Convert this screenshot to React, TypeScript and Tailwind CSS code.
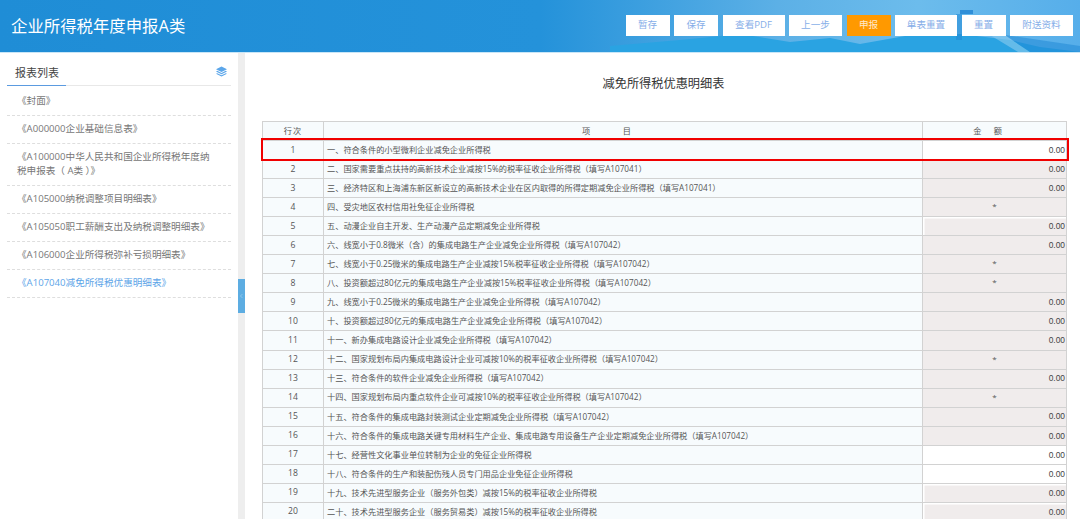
import { ChevronLeft } from 'lucide-react';

const FONT = '[font-family:"Open_Sans","Noto_Sans_CJK_SC",sans-serif]';

const BUTTONS = [
  { label: '暂存', width: 'w-[44px]' },
  { label: '保存', width: 'w-[44px]' },
  { label: '查看PDF', width: 'w-[62px]' },
  { label: '上一步', width: 'w-[53px]' },
  { label: '申报', width: 'w-[44px]', active: true },
  { label: '单表重置', width: 'w-[62px]' },
  { label: '重置', width: 'w-[44px]' },
  { label: '附送资料', width: 'w-[63px]' },
];

const FORMS = [
  '《封面》',
  '《A000000企业基础信息表》',
  '《A100000中华人民共和国企业所得税年度纳税申报表（ A类 ）》',
  '《A105000纳税调整项目明细表》',
  '《A105050职工薪酬支出及纳税调整明细表》',
  '《A106000企业所得税弥补亏损明细表》',
];

type Amount = 'white' | 'grey' | 'inset' | 'star';

const ROWS: { text: string; amount: Amount }[] = [
  { text: '一、符合条件的小型微利企业减免企业所得税', amount: 'white' },
  { text: '二、国家需要重点扶持的高新技术企业减按15%的税率征收企业所得税（填写A107041）', amount: 'grey' },
  { text: '三、经济特区和上海浦东新区新设立的高新技术企业在区内取得的所得定期减免企业所得税（填写A107041）', amount: 'grey' },
  { text: '四、受灾地区农村信用社免征企业所得税', amount: 'star' },
  { text: '五、动漫企业自主开发、生产动漫产品定期减免企业所得税', amount: 'inset' },
  { text: '六、线宽小于0.8微米（含）的集成电路生产企业减免企业所得税（填写A107042）', amount: 'grey' },
  { text: '七、线宽小于0.25微米的集成电路生产企业减按15%税率征收企业所得税（填写A107042）', amount: 'star' },
  { text: '八、投资额超过80亿元的集成电路生产企业减按15%税率征收企业所得税（填写A107042）', amount: 'star' },
  { text: '九、线宽小于0.25微米的集成电路生产企业减免企业所得税（填写A107042）', amount: 'grey' },
  { text: '十、投资额超过80亿元的集成电路生产企业减免企业所得税（填写A107042）', amount: 'grey' },
  { text: '十一、新办集成电路设计企业减免企业所得税（填写A107042）', amount: 'grey' },
  { text: '十二、国家规划布局内集成电路设计企业可减按10%的税率征收企业所得税（填写A107042）', amount: 'star' },
  { text: '十三、符合条件的软件企业减免企业所得税（填写A107042）', amount: 'grey' },
  { text: '十四、国家规划布局内重点软件企业可减按10%的税率征收企业所得税（填写A107042）', amount: 'star' },
  { text: '十五、符合条件的集成电路封装测试企业定期减免企业所得税（填写A107042）', amount: 'grey' },
  { text: '十六、符合条件的集成电路关键专用材料生产企业、集成电路专用设备生产企业定期减免企业所得税（填写A107042）', amount: 'grey' },
  { text: '十七、经营性文化事业单位转制为企业的免征企业所得税', amount: 'white' },
  { text: '十八、符合条件的生产和装配伤残人员专门用品企业免征企业所得税', amount: 'white' },
  { text: '十九、技术先进型服务企业（服务外包类）减按15%的税率征收企业所得税', amount: 'inset' },
  { text: '二十、技术先进型服务企业（服务贸易类）减按15%的税率征收企业所得税', amount: 'inset' },
];

function AmountCell({ amount }: { amount: Amount }) {
  if (amount === 'star') {
    return (
      <td className="border border-[#d2d2d2] bg-[#f0ecec] pb-[2px] text-center align-middle text-[8px] leading-none text-[#555]">
        *
      </td>
    );
  }
  const bg =
    amount === 'white'
      ? 'bg-white'
      : amount === 'grey'
        ? 'bg-[#f0ecec]'
        : 'bg-[#f0ecec] shadow-[inset_1.5px_1.5px_0_#fff]';
  return (
    <td className={`border border-[#d2d2d2] pr-px text-right align-middle font-['Liberation_Sans'] text-[8.4px] leading-none text-[#444] ${bg}`}>
      0.00
    </td>
  );
}

function HeaderArt() {
  return (
    <svg className="absolute inset-0 h-full w-full" viewBox="0 0 1080 52" preserveAspectRatio="none">
      <defs>
        <linearGradient id="sky" x1="0" x2="1" y1="0" y2="0">
          <stop offset="0" stopColor="#1f8dd6" />
          <stop offset="0.5" stopColor="#2492da" />
          <stop offset="0.72" stopColor="#5cb0e6" />
          <stop offset="0.85" stopColor="#6cbcec" />
          <stop offset="1" stopColor="#56aeea" />
        </linearGradient>
      </defs>
      <rect width="1080" height="52" fill="url(#sky)" />
      <path d="M610 46 L680 40 L740 34 L790 42 L830 38 L860 44 L905 36 L960 34 L1010 40 L1040 47 L1080 52 L610 52 Z" fill="#2aa3e2" />
      <path d="M956 14 L962 14 L962 40 L956 40 Z" fill="#1c86d4" opacity="0.5" />
      <path d="M960 10 L973 10 L973 14 L960 14 Z" fill="#2f8fd8" />
      <path d="M990 35 L1006 36 L1030 52 L1018 52 Z" fill="#8ccbee" opacity="0.6" />
      <path d="M1005 35 L1080 46 L1080 52 L1030 52 Z" fill="#1c86d4" opacity="0.5" />
    </svg>
  );
}

export default function App() {
  return (
    <div className={`flex h-[519px] w-[1080px] flex-col overflow-hidden bg-white ${FONT}`}>
      <header className="relative flex h-[53px] shrink-0 items-start justify-between border-b border-[#c9e6f7]">
        <HeaderArt />
        <h1 className="relative pl-[11px] pt-[16px] text-[16.4px] leading-[20px] text-white">企业所得税年度申报A类</h1>
        <div className="relative flex gap-[4.5px] pr-[7px] pt-[15px]">
          {BUTTONS.map((btn) => (
            <button
              key={btn.label}
              className={`h-[20.5px] text-[9.6px] leading-none ${btn.width} ${
                btn.active ? 'bg-[#ff9900] text-[#ffeacc]' : 'bg-white text-[#86aee8]'
              }`}
            >
              {btn.label}
            </button>
          ))}
        </div>
      </header>

      <div className="flex min-h-0 flex-1">
        <aside className="w-[238px] shrink-0 px-[7px]">
          <div className="flex h-[33px] items-start justify-between border-b border-[#e8e8e8]">
            <div className="h-[33px] w-[59px] border-b-[1.5px] border-[#5b9be0] pl-[8px] pt-[12px] text-[11px] leading-[16px] text-[#444]">
              报表列表
            </div>
            <svg className="mr-[4px] mt-[13px] h-[11px] w-[11px]" viewBox="0 0 12 11" fill="#5ba6ea">
              <path d="M6 0 L12 3 L6 6 L0 3 Z" />
              <path d="M1.4 4.7 L6 7 L10.6 4.7 L12 5.4 L6 8.4 L0 5.4 Z" />
              <path d="M1.4 7.3 L6 9.6 L10.6 7.3 L12 8 L6 11 L0 8 Z" />
            </svg>
          </div>
          <ul className="pt-[1.5px] text-[9.6px] leading-[14px] text-[#777]">
            {FORMS.map((name) => (
              <li key={name} className="border-b border-dashed border-[#dedede] py-[6.5px] pl-[10px] pr-[18px]">
                {name}
              </li>
            ))}
            <li className="border-b border-dashed border-[#dedede] py-[6.5px] pl-[10px] pr-[18px] text-[#5da5e8]">
              《A107040减免所得税优惠明细表》
            </li>
          </ul>
        </aside>

        <div className="relative w-[7px] shrink-0 bg-[#eeeeee]">
          <div className="absolute left-0 top-[226px] flex h-[34px] w-[6.5px] items-center justify-center bg-[#5dade2]">
            <ChevronLeft className="h-[8px] w-[8px] text-[#d5ebf8]" strokeWidth={1.5} />
          </div>
        </div>

        <main className="min-w-0 flex-1 pl-[17px] pr-[14px]">
          <h2 className="pb-[28px] pr-px pt-[22px] text-center text-[12.2px] leading-[18px] text-[#333]">
            减免所得税优惠明细表
          </h2>
          <div className="relative w-[804px]">
            <table className="w-full table-fixed border-collapse text-[8.2px] text-[#555]">
              <colgroup>
                <col className="w-[61px]" />
                <col className="w-[599px]" />
                <col className="w-[144px]" />
              </colgroup>
              <thead>
                <tr className="h-[19px] bg-[#f7fbfd]">
                  <th className="border border-[#d2d2d2] text-center font-normal tracking-[1px]">行次</th>
                  <th className="border border-[#d2d2d2] pr-[33px] text-center font-normal">项&emsp;&emsp;&emsp;&emsp;目</th>
                  <th className="border border-[#d2d2d2] pr-[14px] text-center font-normal">金&emsp;&ensp;额</th>
                </tr>
              </thead>
              <tbody>
                {ROWS.map((row, i) => (
                  <tr key={row.text} className="h-[19.05px] bg-[#f7fbfd]">
                    <td className="border border-[#d2d2d2] text-center text-[8.6px]">{i + 1}</td>
                    <td className="whitespace-nowrap border border-[#d2d2d2] pl-[3px]">{row.text}</td>
                    <AmountCell amount={row.amount} />
                  </tr>
                ))}
              </tbody>
            </table>
            <div className="absolute -left-px top-[17.3px] h-[22.7px] w-[808.3px] border-[2.5px] border-[#f00000]" />
          </div>
        </main>
      </div>
    </div>
  );
}
